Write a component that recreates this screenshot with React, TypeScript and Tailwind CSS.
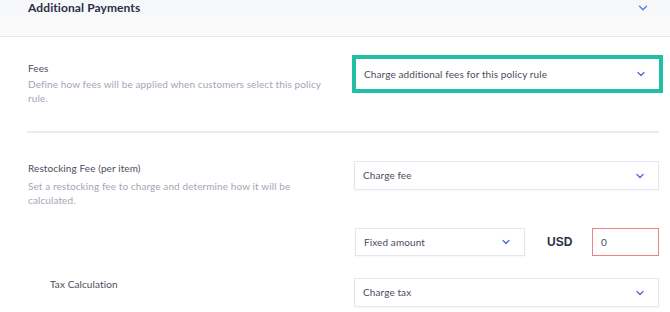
import { ChevronDown } from "lucide-react";

function Select({ label, className }: { label: string; className?: string }) {
  return (
    <div
      className={
        "flex items-center justify-between bg-white border border-[#e4e7f0] shadow-[0_1px_2px_rgba(0,0,0,0.04)] pl-[8px] pr-[12px] text-[10px] text-[#4b4d5c] " +
        (className ?? "")
      }
    >
      <span>{label}</span>
      <ChevronDown className="w-[12px] h-[12px] text-[#4867d6]" strokeWidth={2.4} />
    </div>
  );
}

export default function App() {
  return (
    <div className="w-[670px] h-[312px] overflow-hidden bg-white font-['Lato',sans-serif] tracking-[0.1px]">
      {/* header */}
      <div className="h-[37px] bg-gradient-to-b from-[#f6f7f9] to-[#fbfbfc] border-b border-[#e7e8ee] flex items-start justify-between pl-[28px] pr-[20px]">
        <span className="text-[12px] font-bold text-[#2c2f45] leading-[16px]">Additional Payments</span>
        <ChevronDown className="w-[14px] h-[14px] text-[#5577d9] mt-[1px]" strokeWidth={2.2} />
      </div>

      {/* fees */}
      <div className="flex items-start pl-[28px] pr-[7px] pt-[18px] h-[93px]">
        <div className="w-[300px] pt-[6px]">
          <div className="text-[10px] text-[#4b4d5c] leading-[14px]">Fees</div>
          <div className="text-[10px] text-[#a3a6b5] leading-[14px] mt-[2px]">
            Define how fees will be applied when customers select this policy rule.
          </div>
        </div>
        <div className="ml-auto border-[4px] border-[#22bfa5] w-[311px] h-[38px]">
          <Select label="Charge additional fees for this policy rule" className="h-full border-0 shadow-none pr-[8px]" />
        </div>
      </div>

      <div className="ml-[27px] mr-[11px] mt-[1px] h-[2px] bg-[#ececef]" />

      {/* restocking */}
      <div className="flex items-start pl-[28px] pr-[11px] pt-[28px] h-[95px]">
        <div className="w-[300px]">
          <div className="text-[10px] text-[#4b4d5c] leading-[14px]">Restocking Fee (per item)</div>
          <div className="text-[10px] text-[#a3a6b5] leading-[14px] mt-[4px]">
            Set a restocking fee to charge and determine how it will be calculated.
          </div>
        </div>
        <Select label="Charge fee" className="ml-auto w-[305px] h-[29px]" />
      </div>

      <div className="flex items-center pl-[355px] pr-[11px]">
        <Select label="Fixed amount" className="w-[170px] h-[28px]" />
        <span className="ml-[22px] text-[12px] font-semibold text-[#2c2f45] font-['Liberation_Sans',sans-serif]">USD</span>
        <div className="ml-auto w-[67px] h-[28px] border border-[#ea8482] bg-white flex items-center pl-[8px] text-[10px] text-[#4b4d5c]">
          0
        </div>
      </div>

      <div className="flex items-start pl-[50px] pr-[11px] mt-[22px]">
        <div className="text-[10px] text-[#4b4d5c] leading-[14px] -mt-[1px]">Tax Calculation</div>
        <Select label="Charge tax" className="ml-auto w-[305px] h-[29px]" />
      </div>
    </div>
  );
}
